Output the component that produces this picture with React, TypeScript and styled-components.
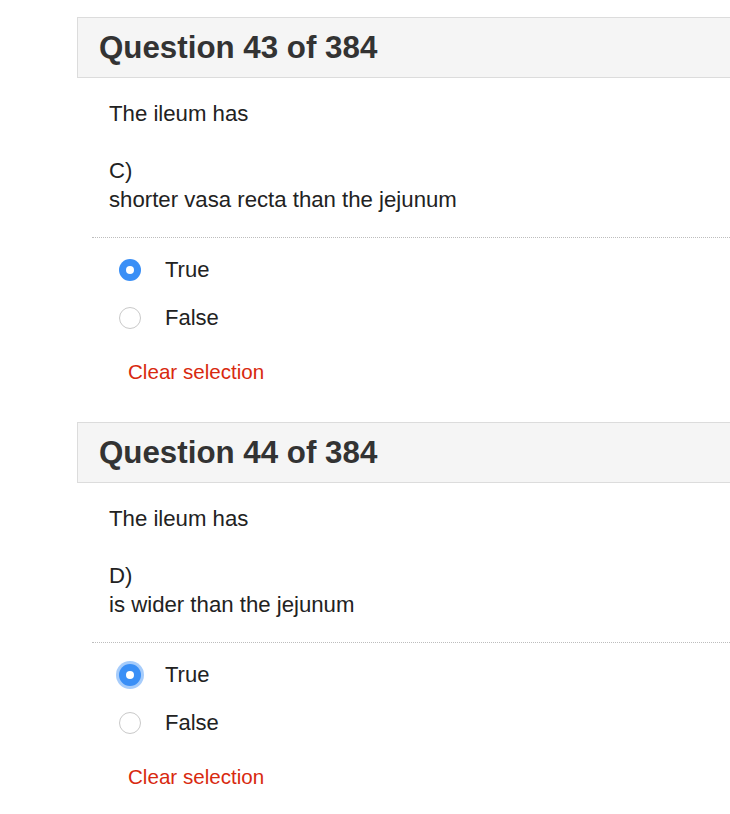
import React from "react";
import styled, { createGlobalStyle } from "styled-components";

const Global = createGlobalStyle`
  html, body { margin: 0; padding: 0; background: #fff; overflow-x: hidden; }
  body { font-family: "Liberation Sans", Arial, Helvetica, sans-serif; color: #222; }
`;

const Page = styled.div`
  padding-top: 17px;
  padding-left: 77px;
  display: flex;
  flex-direction: column;
`;

const Card = styled.section`
  display: flex;
  flex-direction: column;
  margin-bottom: 36.5px;
`;

const Header = styled.div`
  box-sizing: border-box;
  height: 61px;
  margin-right: -20px;
  border: 1px solid #dcdcdc;
  background: #f5f5f5;
  display: flex;
  align-items: center;
  padding: 0 21px;
`;

const Title = styled.h2`
  margin: 0;
  font-size: 31.3px;
  font-weight: 700;
  color: #333;
`;

const Body = styled.div`
  padding: 20.5px 0 0 32px;
  font-size: 22.2px;
  line-height: 29px;
  color: #222;
`;

const Line = styled.p<{ $gap?: number }>`
  margin: 0;
  margin-top: ${(p) => p.$gap ?? 0}px;
`;

const Divider = styled.hr`
  margin: 23.5px -20px 0 15px;
  border: none;
  border-top: 1px dotted #bdbdbd;
  height: 0;
`;

const Options = styled.div`
  display: flex;
  flex-direction: column;
  padding: 8px 0 0 42px;
`;

const OptionRow = styled.label`
  display: flex;
  align-items: center;
  gap: 24px;
  height: 48px;
  font-size: 22px;
  color: #222;
`;

const Radio = styled.span<{ $checked?: boolean; $focus?: boolean }>`
  box-sizing: border-box;
  width: 22px;
  height: 22px;
  border-radius: 50%;
  flex: none;
  display: flex;
  align-items: center;
  justify-content: center;
  background: ${(p) => (p.$checked ? "#3a8ff6" : "#fff")};
  border: ${(p) => (p.$checked ? "none" : "1.5px solid #c9c9c9")};
  box-shadow: ${(p) => (p.$focus ? "0 0 0 3px rgba(58,143,246,0.45)" : "none")};
  &::after {
    content: "";
    display: ${(p) => (p.$checked ? "block" : "none")};
    width: 8px;
    height: 8px;
    border-radius: 50%;
    background: #fff;
  }
`;

const Clear = styled.a`
  display: block;
  margin: 14.5px 0 0 51px;
  font-size: 20.6px;
  line-height: 29px;
  color: #d8290f;
  text-decoration: none;
`;

type Q = { n: number; letter: string; text: string; focus: boolean };

const questions: Q[] = [
  { n: 43, letter: "C)", text: "shorter vasa recta than the jejunum", focus: false },
  { n: 44, letter: "D)", text: "is wider than the jejunum", focus: true },
];

export default function App() {
  return (
    <>
      <Global />
      <Page>
        {questions.map((q) => (
          <Card key={q.n}>
            <Header>
              <Title>Question {q.n} of 384</Title>
            </Header>
            <Body>
              <Line>The ileum has</Line>
              <Line $gap={28}>{q.letter}</Line>
              <Line>{q.text}</Line>
            </Body>
            <Divider />
            <Options>
              <OptionRow>
                <Radio $checked $focus={q.focus} />
                True
              </OptionRow>
              <OptionRow>
                <Radio />
                False
              </OptionRow>
            </Options>
            <Clear href="#">Clear selection</Clear>
          </Card>
        ))}
      </Page>
    </>
  );
}
